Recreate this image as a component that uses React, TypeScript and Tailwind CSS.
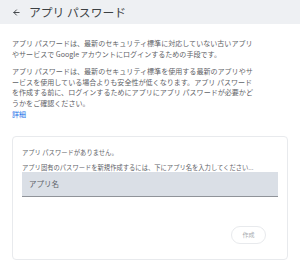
import { ArrowLeft } from 'lucide-react'

export default function App() {
  return (
    <div
      className="w-[300px] h-[279px] bg-white overflow-hidden text-[#5f6368]"
      style={{ fontFamily: '"Noto Sans CJK JP", "Noto Sans", sans-serif' }}
    >
      {/* Header */}
      <div className="h-[24px] bg-[#eef0f3] flex items-center pl-[12px] gap-[8px]">
        <ArrowLeft className="w-[9px] h-[9px] text-[#3c4043]" strokeWidth={2.5} />
        <span className="text-[11.8px] leading-none text-[#3c4043]">アプリ パスワード</span>
      </div>

      {/* Description */}
      <div className="px-[12px] pt-[14px] text-[7.05px] leading-[10.6px]">
        <p>
          アプリ パスワードは、最新のセキュリティ標準に対応していない古いアプリ
          <br />
          やサービスで Google アカウントにログインするための手段です。
        </p>
        <p className="mt-[7px]">
          アプリ パスワードは、最新のセキュリティ標準を使用する最新のアプリやサ
          <br />
          ービスを使用している場合よりも安全性が低くなります。アプリ パスワード
          <br />
          を作成する前に、ログインするためにアプリにアプリ パスワードが必要かど
          <br />
          うかをご確認ください。
        </p>
        <a className="block text-[#1a73e8]">詳細</a>
      </div>

      {/* Card */}
      <div className="mx-[12px] mt-[17px] h-[124px] border border-[#e8eaed] rounded-[4px] pt-[11px] px-[9px]">
        <p className="text-[6.3px] leading-[9px]">アプリ パスワードがありません。</p>
        <p className="text-[6.3px] leading-[9px] mt-[6px]">
          アプリ固有のパスワードを新規作成するには、下にアプリ名を入力してください...
        </p>
        <div className="h-[25px] bg-[#dadfe6] border-b border-[#8f9399] flex items-center pl-[7px]">
          <span className="text-[7.5px] leading-none text-[#5f6368]">アプリ名</span>
        </div>
        <div className="flex justify-end pr-[12px] mt-[29px]">
          <button className="w-[35px] h-[18px] rounded-full border border-[#e8eaed] text-[6px] leading-none text-[#a8abaf] flex items-center justify-center">
            作成
          </button>
        </div>
      </div>
    </div>
  )
}
